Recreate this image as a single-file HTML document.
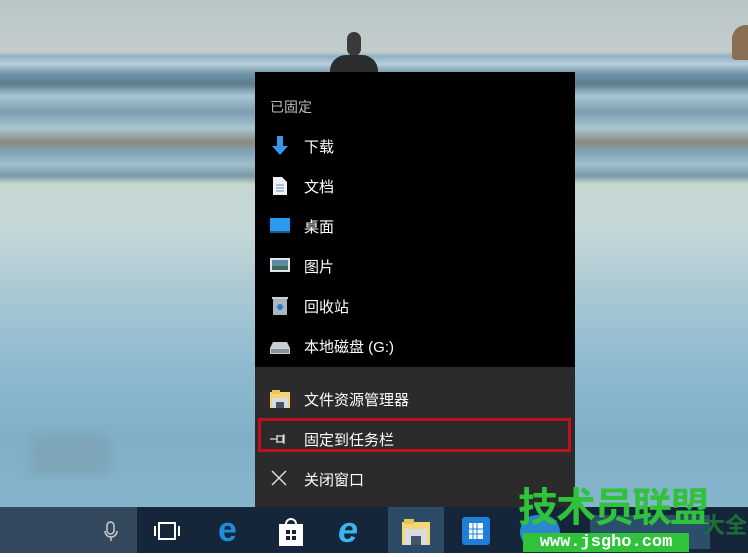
<!DOCTYPE html>
<html><head><meta charset="utf-8"><style>
*{margin:0;padding:0;box-sizing:border-box}
body{width:748px;height:557px;overflow:hidden;position:relative;background:#fff;font-family:"Liberation Sans","Noto Sans CJK SC",sans-serif}
.bg{position:absolute;left:0;top:0;width:748px;height:553px;background:linear-gradient(180deg,#b9c5c7 0,#c3cccb 52px,#8fb0c4 56px,#b7cedb 64px,#6f93a8 74px,#5d7c8c 84px,#a9c6d4 96px,#7b9db0 112px,#a8c6d2 128px,#8a8a80 142px,#7fa3b5 152px,#a1c0cd 164px,#7a98a6 176px,#c6d6d0 184px,#c4d8d8 230px,#abc9d4 290px,#8fbbd0 360px,#7fb0c8 440px,#85b5cc 505px)}
.fig{position:absolute;left:330px;top:55px;width:48px;height:20px;background:#2a2c2e;border-radius:16px 16px 0 0}
.head{position:absolute;left:347px;top:32px;width:14px;height:24px;background:#3a3a38;border-radius:7px}
.rock{position:absolute;left:732px;top:25px;width:18px;height:35px;background:#8a6f52;border-radius:14px 0 0 4px}
.menu{position:absolute;left:255px;top:72px;width:320px;height:435px;background:#000}
.low{position:absolute;left:0;top:295px;width:320px;height:140px;background:#2b2b2b}
.t{position:absolute;color:#fff;font-size:15px;left:49px}
.hd{position:absolute;left:15px;top:25px;color:#bbb;font-size:14px}
.ic{position:absolute;left:15px}
.sel{position:absolute;left:3px;top:346px;width:313px;height:34px;border:3px solid #c0101c}
.tb{position:absolute;left:0;top:507px;width:748px;height:46px;background:#15263a}
.tbl{position:absolute;left:0;top:507px;width:137px;height:46px;background:#34495e}
.act{position:absolute;left:388px;top:507px;width:56px;height:46px;background:#2b4a66}
.wm{position:absolute;left:518px;top:486px;color:#2fc23a;font-size:40px;font-weight:bold;letter-spacing:-2px;line-height:44px}
.wm2{position:absolute;left:523px;top:533px;width:166px;height:19px;background:#2fc23a;color:#fff;font-size:17px;font-weight:bold;text-align:center;line-height:19px;font-family:"Liberation Mono",monospace}
</style></head><body>
<div class="bg"></div>
<div class="head"></div><div class="fig"></div><div class="rock"></div>
<div style="position:absolute;left:30px;top:435px;width:80px;height:40px;background:#7d9fb0;filter:blur(6px);opacity:.7"></div>
<div class="menu">
 <div class="hd">已固定</div>
 <svg class="ic" style="top:64px" width="20" height="20"><path d="M7 0h6v10h5l-8 9-8-9h5z" fill="#3a96e8"/></svg>
 <div class="t" style="top:64px">下载</div>
 <svg class="ic" style="top:104px;left:17px" width="16" height="20"><path d="M1 1h9l5 5v13H1z" fill="#eef2f6"/><path d="M4 9h8M4 12h8M4 15h8" stroke="#6a8ab0"/></svg>
 <div class="t" style="top:104px">文档</div>
 <svg class="ic" style="top:146px" width="20" height="16"><rect width="20" height="15" fill="#2a9aee"/><rect y="13" width="20" height="2" fill="#1a5a90"/></svg>
 <div class="t" style="top:144px">桌面</div>
 <svg class="ic" style="top:186px" width="20" height="16"><rect width="20" height="14" fill="#dfe6ec"/><rect x="2" y="2" width="16" height="10" fill="#5a8aa8"/><rect x="2" y="8" width="16" height="4" fill="#3f6a55"/></svg>
 <div class="t" style="top:184px">图片</div>
 <svg class="ic" style="top:224px;left:17px" width="16" height="20"><rect x="1" y="2" width="14" height="17" fill="#aab4bd"/><rect x="0" y="1" width="16" height="2" fill="#ccd"/><circle cx="8" cy="11" r="3" fill="#2a7ad0"/></svg>
 <div class="t" style="top:224px">回收站</div>
 <svg class="ic" style="top:270px" width="20" height="12"><path d="M3 0h14l3 6v6H0V6z" fill="#c8cdd2"/><rect x="1" y="7" width="18" height="4" fill="#8a9096"/></svg>
 <div class="t" style="top:264px">本地磁盘 (G:)</div>
 <div class="low">
  <svg style="position:absolute;left:15px;top:23px" width="20" height="18"><rect y="2" width="20" height="16" fill="#f3d774"/><rect x="2" y="0" width="8" height="4" fill="#e8c55a"/><rect x="2" y="8" width="16" height="10" fill="#d7dde3"/><rect x="6" y="12" width="8" height="6" fill="#4a5460"/></svg>
  <div class="t" style="top:22px">文件资源管理器</div>
  <svg style="position:absolute;left:15px;top:66px" width="20" height="12"><path d="M0 6h7M7 2v8M7 3h6v6H7M13 2h1v8h-1" stroke="#ddd" stroke-width="1.3" fill="none"/></svg>
  <div class="t" style="top:62px">固定到任务栏</div>
  <svg style="position:absolute;left:16px;top:103px" width="16" height="16"><path d="M1 1l14 14M15 1L1 15" stroke="#ddd" stroke-width="1.5"/></svg>
  <div class="t" style="top:102px">关闭窗口</div>
 </div>
 <div class="sel"></div>
</div>
<div class="tb"></div><div class="tbl"></div><div class="act"></div>
<svg style="position:absolute;left:104px;top:521px" width="14" height="22"><rect x="3" y="1" width="7" height="12" rx="3.5" fill="none" stroke="#ccc" stroke-width="1.5"/><path d="M1 10a6 6 0 0 0 12 0M7 16v4" stroke="#ccc" fill="none" stroke-width="1.5"/></svg>
<svg style="position:absolute;left:154px;top:522px" width="28" height="18"><rect x="5" y="1" width="16" height="16" fill="none" stroke="#fff" stroke-width="2"/><path d="M1 4v10M25 4v10" stroke="#fff" stroke-width="2"/></svg>
<div style="position:absolute;left:218px;top:511px;color:#1e8fe0;font-size:34px;font-weight:bold;font-family:'Liberation Sans',sans-serif">e</div>
<svg style="position:absolute;left:278px;top:516px" width="26" height="30"><path d="M8 8a5 5 0 0 1 10 0" stroke="#fff" fill="none" stroke-width="2"/><rect x="1" y="8" width="24" height="22" fill="#fff"/><rect x="8" y="14" width="4" height="4" fill="#15263a"/><rect x="14" y="14" width="4" height="4" fill="#15263a"/><rect x="8" y="20" width="4" height="4" fill="#15263a"/><rect x="14" y="20" width="4" height="4" fill="#15263a"/></svg>
<div style="position:absolute;left:338px;top:509px;color:#39b4ec;font-size:36px;font-style:italic;font-weight:bold">e</div>
<svg style="position:absolute;left:402px;top:519px" width="28" height="26"><rect y="3" width="28" height="23" fill="#f3d774"/><rect x="2" y="0" width="10" height="5" fill="#e8c55a"/><rect x="3" y="10" width="22" height="16" fill="#d7dde3"/><rect x="9" y="17" width="10" height="9" fill="#4a5460"/></svg>
<svg style="position:absolute;left:462px;top:517px" width="28" height="28"><rect width="28" height="28" rx="3" fill="#1e7ed8"/><rect x="7" y="6" width="14" height="16" fill="#fff"/><path d="M11 6v16M15 6v16M7 12h14M7 17h14" stroke="#1e7ed8"/></svg>
<div style="position:absolute;left:520px;top:515px;width:40px;height:34px;border-radius:20px;background:#2a86d0"></div>
<div style="position:absolute;left:590px;top:515px;width:120px;height:34px;background:#3a6a8a;opacity:.6"></div>
<div class="wm">技术员联盟</div>
<div style="position:absolute;left:703px;top:508px;color:#1f6e3a;font-size:22px;font-weight:bold">大全</div>
<div class="wm2">www.jsgho.com</div>
</body></html>
